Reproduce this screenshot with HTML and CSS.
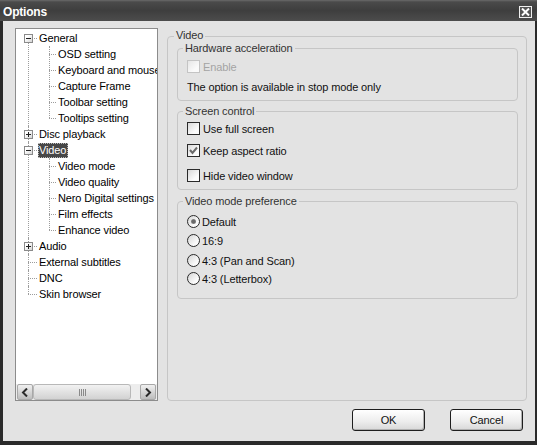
FILE: index.html
```html
<!DOCTYPE html>
<html>
<head>
<meta charset="utf-8">
<title>Options</title>
<link rel="stylesheet" href="styles.css">
</head>
<body>
<div class="window">
  <div class="titlebar">
    <span class="title">Options</span>
    <span class="close"><svg width="9" height="8" viewBox="0 0 9 8"><path d="M1 0.5 L8 7.5 M8 0.5 L1 7.5" stroke="#fff" stroke-width="2"/></svg></span>
  </div>
  <div class="frame">
    <div class="content">
      <div class="main">
        <div class="treepanel">
          <ul class="tree">
            <li>
              <div class="row"><span class="exp minus"></span><span class="label">General</span></div>
              <ul class="sub">
                <li><span class="label">OSD setting</span></li>
                <li><span class="label">Keyboard and mouse</span></li>
                <li><span class="label">Capture Frame</span></li>
                <li><span class="label">Toolbar setting</span></li>
                <li><span class="label">Tooltips setting</span></li>
              </ul>
            </li>
            <li><div class="row"><span class="exp plus"></span><span class="label">Disc playback</span></div></li>
            <li>
              <div class="row"><span class="exp minus"></span><span class="label selected">Video</span></div>
              <ul class="sub">
                <li><span class="label">Video mode</span></li>
                <li><span class="label">Video quality</span></li>
                <li><span class="label">Nero Digital settings</span></li>
                <li><span class="label">Film effects</span></li>
                <li><span class="label">Enhance video</span></li>
              </ul>
            </li>
            <li><div class="row"><span class="exp plus"></span><span class="label">Audio</span></div></li>
            <li><div class="row"><span class="label">External subtitles</span></div></li>
            <li><div class="row"><span class="label">DNC</span></div></li>
            <li><div class="row"><span class="label">Skin browser</span></div></li>
          </ul>
          <div class="hscroll">
            <span class="sbtn"><svg width="8" height="9" viewBox="0 0 8 9"><path d="M6 0.5 L2 4.5 L6 8.5" fill="none" stroke="#2a2a2a" stroke-width="2"/></svg></span>
            <span class="thumb"><span class="grip"></span></span>
            <span class="track"></span>
            <span class="sbtn"><svg width="8" height="9" viewBox="0 0 8 9"><path d="M2 0.5 L6 4.5 L2 8.5" fill="none" stroke="#2a2a2a" stroke-width="2"/></svg></span>
          </div>
        </div>
        <div class="group outer">
          <span class="gtitle">Video</span>
          <div class="group hw">
            <span class="gtitle">Hardware acceleration</span>
            <div class="opt first disabled"><span class="cb"></span><span>Enable</span></div>
            <div class="note">The option is available in stop mode only</div>
          </div>
          <div class="group screen">
            <span class="gtitle">Screen control</span>
            <div class="opt first"><span class="cb"></span><span>Use full screen</span></div>
            <div class="opt keep"><span class="cb checked"><svg width="11" height="11" viewBox="0 0 11 11"><path d="M2 5 L4.5 8 L9 2.5" fill="none" stroke="#6a6a6a" stroke-width="2"/></svg></span><span>Keep aspect ratio</span></div>
            <div class="opt hide"><span class="cb"></span><span>Hide video window</span></div>
          </div>
          <div class="group mode">
            <span class="gtitle">Video mode preference</span>
            <div class="opt radio first"><span class="rb on"></span><span>Default</span></div>
            <div class="opt radio"><span class="rb"></span><span>16:9</span></div>
            <div class="opt radio alt"><span class="rb"></span><span>4:3 (Pan and Scan)</span></div>
            <div class="opt radio last"><span class="rb"></span><span>4:3 (Letterbox)</span></div>
          </div>
        </div>
      </div>
      <div class="buttons">
        <button class="btn">OK</button>
        <button class="btn">Cancel</button>
      </div>
    </div>
  </div>
</div>
</body>
</html>
```
FILE: styles.css
```css
html, body {
  margin: 0;
  padding: 0;
  background: #2a2a2a;
}
body {
  font-family: "Liberation Sans", Arial, sans-serif;
  font-size: 11px;
  letter-spacing: -0.12px;
  color: #000;
}
.window {
  width: 537px;
  height: 445px;
  display: flex;
  flex-direction: column;
  background: #2a2a2a;
}
.titlebar {
  height: 21px;
  flex: none;
  display: flex;
  align-items: center;
  justify-content: space-between;
  padding: 1px 5px 0 3px;
  box-sizing: border-box;
  background: linear-gradient(#6a6a6a 0, #4a4a4a 2px, #3e3e3e 50%, #4c4c4c 100%);
}
.title {
  color: #fff;
  font-weight: bold;
  font-size: 12px;
  letter-spacing: -0.2px;
  padding-top: 1px;
}
.close {
  width: 13px;
  height: 12px;
  box-sizing: border-box;
  border: 1px solid #f0f0f0;
  display: flex;
  align-items: center;
  justify-content: center;
  background: #555;
  margin-top: 2px;
}
.frame {
  flex: 1;
  display: flex;
  padding: 0 2px 4px 3px;
}
.content {
  flex: 1;
  background: #e3e3e3;
  display: flex;
  flex-direction: column;
  padding: 7px 8px 10px 12px;
}
.main {
  height: 373px;
  display: flex;
  align-items: stretch;
}
.treepanel {
  width: 143px;
  box-sizing: border-box;
  border: 1px solid #8c8c8c;
  background: #fff;
  display: flex;
  flex-direction: column;
  overflow: hidden;
}
.tree {
  flex: 1;
  list-style: none;
  margin: 0;
  padding: 1px 0 0 0;
  overflow: hidden;
}
.tree > li {
  position: relative;
  padding-left: 22px;
}
.tree > li::before {
  content: "";
  position: absolute;
  left: 12px;
  top: 8px;
  width: 9px;
  border-top: 1px dotted #9c9c9c;
}
.tree > li::after {
  content: "";
  position: absolute;
  left: 12px;
  top: 0;
  bottom: 0;
  border-left: 1px dotted #9c9c9c;
}
.tree > li:first-child::after {
  top: 9px;
}
.tree > li:last-child::after {
  bottom: 8px;
}
.row, .sub > li {
  height: 16px;
  display: flex;
  align-items: center;
  white-space: nowrap;
}
.label {
  padding: 0 1px;
  line-height: 15px;
  height: 15px;
  box-sizing: border-box;
}
.label.selected {
  background: #474747;
  color: #fff;
  outline: 1px dotted #bbb;
  outline-offset: -1px;
  padding: 0 2px 0 1px;
}
.exp {
  position: absolute;
  left: 8px;
  top: 4px;
  width: 9px;
  height: 9px;
  box-sizing: border-box;
  border: 1px solid #8a8a8a;
  background: linear-gradient(135deg, #fff 30%, #d4d4d4);
  z-index: 1;
}
.exp::before {
  content: "";
  position: absolute;
  left: 1px;
  top: 3px;
  width: 5px;
  height: 1px;
  background: #222;
}
.exp.plus::after {
  content: "";
  position: absolute;
  left: 3px;
  top: 1px;
  width: 1px;
  height: 5px;
  background: #222;
}
.sub {
  list-style: none;
  margin: 0;
  padding: 0;
  position: relative;
}
.sub::before {
  content: "";
  position: absolute;
  left: 11px;
  top: 0;
  bottom: 8px;
  border-left: 1px dotted #9c9c9c;
}
.sub > li {
  position: relative;
  padding-left: 19px;
}
.sub > li::before {
  content: "";
  position: absolute;
  left: 11px;
  top: 8px;
  width: 7px;
  border-top: 1px dotted #9c9c9c;
}
.hscroll {
  height: 16px;
  flex: none;
  display: flex;
  padding: 0 1px;
  background: #ededed;
}
.sbtn {
  width: 16px;
  height: 16px;
  box-sizing: border-box;
  border: 1px solid #a8a8a8;
  border-radius: 2px;
  background: linear-gradient(#f0f0f0, #bdbdbd);
  display: flex;
  align-items: center;
  justify-content: center;
}
.thumb {
  width: 98px;
  height: 16px;
  box-sizing: border-box;
  border: 1px solid #b8b8b8;
  border-radius: 3px;
  background: linear-gradient(#f2f2f2, #d2d2d2);
  display: flex;
  align-items: center;
  justify-content: center;
}
.grip {
  width: 7px;
  height: 7px;
  background: repeating-linear-gradient(90deg, #8a8a8a 0 1px, transparent 1px 2px);
}
.track {
  flex: 1;
}
.group {
  border: 1px solid #c6c6c6;
  border-radius: 4px;
  display: flex;
  flex-direction: column;
  align-items: flex-start;
}
.gtitle {
  display: block;
  margin: -7px 0 0 -3px;
  padding: 0 2px;
  line-height: 13px;
  background: #e3e3e3;
  color: #333;
}
.outer {
  flex: 1;
  margin: 8px 0 0 9px;
  padding: 0 8px 0 9px;
  align-items: stretch;
}
.outer > .gtitle {
  align-self: flex-start;
  margin-top: -8px;
}
.outer > .group {
  padding: 0 8px 0 9px;
}
.outer > .group > .gtitle {
  margin-left: -4px;
}
.hw {
  margin-top: 6px;
  padding-bottom: 6px !important;
}
.screen {
  margin-top: 10px;
  padding-bottom: 7px !important;
}
.mode {
  margin-top: 11px;
  padding-bottom: 13px !important;
}
.opt {
  display: flex;
  align-items: center;
  height: 13px;
  gap: 3px;
  white-space: nowrap;
  color: #111;
}
.opt.first {
  margin-top: 5px;
}
.screen .opt.first {
  margin-top: 4px;
}
.opt.keep {
  margin-top: 9px;
}
.opt.hide {
  margin-top: 12px;
}
.opt.radio {
  gap: 2px;
  margin-top: 6px;
}
.opt.radio.first, .opt.radio.alt {
  margin-top: 7px;
}
.opt.radio.last {
  margin-top: 5px;
}
.opt.disabled {
  color: #a4a4a4;
}
.note {
  margin-top: 8px;
  line-height: 13px;
  color: #111;
}
.cb {
  width: 13px;
  height: 13px;
  box-sizing: border-box;
  border: 1px solid #2a2a2a;
  background: linear-gradient(135deg, #d8d8d8, #fbfbfb 70%);
  display: flex;
  align-items: center;
  justify-content: center;
}
.disabled .cb {
  border-color: #c4c4c4;
  background: linear-gradient(135deg, #e6e6e6, #fafafa 70%);
}
.rb {
  width: 13px;
  height: 13px;
  box-sizing: border-box;
  border: 1px solid #2a2a2a;
  border-radius: 50%;
  background: linear-gradient(135deg, #d4d4d4, #fbfbfb 70%);
  display: flex;
  align-items: center;
  justify-content: center;
}
.rb.on::before {
  content: "";
  width: 5px;
  height: 5px;
  border-radius: 50%;
  background: radial-gradient(circle, #6a6a6a 40%, #a8a8a8 100%);
}
.buttons {
  display: flex;
  justify-content: flex-end;
  gap: 25px;
  margin-top: 8px;
  padding-right: 4px;
}
.btn {
  width: 73px;
  height: 22px;
  box-sizing: border-box;
  border: 1px solid #1e1e1e;
  border-radius: 3px;
  background: linear-gradient(#ffffff, #ececec 60%, #d8d8d8);
  font-family: "Liberation Sans", Arial, sans-serif;
  font-size: 11px;
  letter-spacing: -0.12px;
  color: #111;
  padding: 0;
  box-shadow: inset -1px -1px 0 #b0b0b0;
}
```
